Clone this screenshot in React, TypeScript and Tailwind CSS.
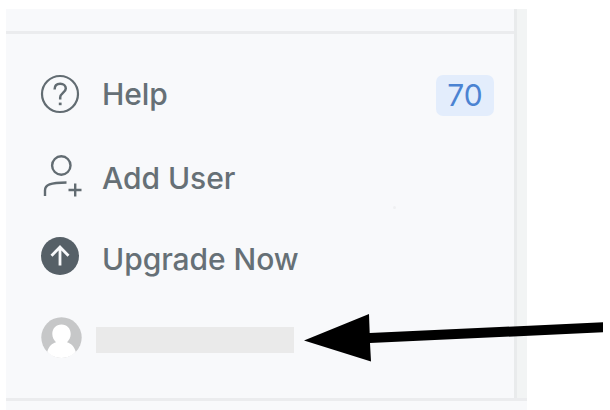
import type { ReactNode } from "react";

function HelpIcon() {
  return (
    <svg width="40" height="40" viewBox="0 0 40 40" fill="none" stroke="#626c72" strokeWidth="2.2">
      <circle cx="20" cy="20" r="18" />
      <path d="M14.6 15.5C14.6 11.5 16.8 9.8 20.2 9.8C23.6 9.8 25.8 11.8 25.8 14.5C25.8 18.4 20.2 19 20.2 23.6V25.6" strokeWidth="2.5" />
      <path d="M20.2 28.6V31.2" strokeWidth="2.8" />
    </svg>
  );
}

function AddUserIcon() {
  return (
    <svg width="42" height="44" viewBox="0 0 42 44" fill="none" stroke="#626c72" strokeWidth="2.4">
      <circle cx="21.3" cy="11.5" r="9.2" />
      <path d="M5 42V36.5C5 31 10 28.5 26.5 28.5" />
      <path d="M28.5 36H41.5M35.2 29.5V42.5" />
    </svg>
  );
}

function UpgradeIcon() {
  return (
    <svg width="40" height="40" viewBox="0 0 40 40" fill="none">
      <circle cx="20" cy="20" r="19" fill="#566067" />
      <path d="M20 29.5V11M11.5 19.8L20 11L28.5 19.8" stroke="#f8f9fb" strokeWidth="2.8" />
    </svg>
  );
}

function Avatar() {
  return (
    <svg className="ml-px" width="41" height="41" viewBox="0 0 41 41">
      <circle cx="20.5" cy="20.5" r="20.2" fill="#c6c7c8" />
      <path d="M20.5 7.5C26 7.5 29.7 11.5 29.7 17C29.7 20.5 28 23.2 26 25.2C30 26.5 33 29 34.8 34.8C31 38.8 26.5 41 20.5 41C14.5 41 10 38.8 6.2 34.8C8 29 11 26.5 15 25.2C13 23.2 11.3 20.5 11.3 17C11.3 11.5 15 7.5 20.5 7.5Z" fill="white" />
    </svg>
  );
}

function Row({ icon, children, className }: { icon: ReactNode; children: ReactNode; className: string }) {
  return (
    <div className={`flex items-center ${className}`}>
      <div className="flex w-[62px] shrink-0">{icon}</div>
      {children}
    </div>
  );
}

const label = "whitespace-nowrap text-[30px] font-medium leading-9 tracking-[-0.05px] text-[#667076]";

export default function App() {
  return (
    <div className="relative h-[410px] w-[610px] overflow-hidden bg-white pl-1.5 pt-[9px] font-['Inter',sans-serif]">
      <div className="flex h-[401px] w-[521px] flex-col bg-[#f8f9fb]">
        <div className="flex h-[389px]">
          <div className="w-[508px]">
            <div className="h-[25px] border-b-3 border-[#ebecee]" />
            <div className="flex h-[364px] flex-col pl-[34px]">
              <Row icon={<HelpIcon />} className="mt-10 h-10">
                <span className={label}>Help</span>
                <span className="ml-auto mr-5 mt-[2px] flex h-[41px] w-[58px] items-center justify-center rounded-[7px] bg-[#e3edfc] text-[30px] text-[#4b83d2]">70</span>
              </Row>
              <Row icon={<AddUserIcon />} className="mt-10 h-11">
                <span className={`${label} mt-1`}>Add User</span>
              </Row>
              <Row icon={<UpgradeIcon />} className="mt-[38px] h-10">
                <span className={`${label} mt-1.5`}>Upgrade Now</span>
              </Row>
              <Row icon={<Avatar />} className="mt-[41px] h-[41px]">
                <span className="-ml-1.5 mt-[5px] h-[26px] w-[198px] bg-[#eaeaea]" />
              </Row>
            </div>
          </div>
          <div className="w-[13px] border-l-3 border-[#e9ebec] bg-[#f2f4f4]" />
        </div>
        <div className="h-[3px] bg-[#ebecee]" />
      </div>
      <span className="absolute left-[393px] top-[206px] size-[3px] rounded-full bg-[#eff0f2]" />
      <svg className="absolute inset-0" width="610" height="410" viewBox="0 0 610 410">
        <path d="M304 340.5L369 314L369.7 333L603 322.3V332.3L370 343L371 361.5Z" fill="black" />
      </svg>
    </div>
  );
}
